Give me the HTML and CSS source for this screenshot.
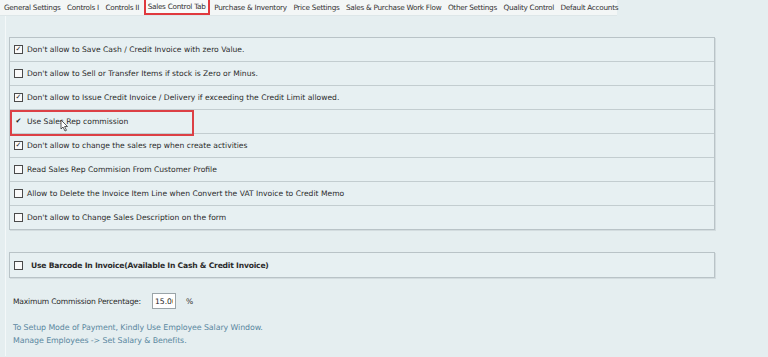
FILE: index.html
```html
<!DOCTYPE html>
<html>
<head>
    <title>Sales Control Tab</title>
    <link rel="stylesheet" href="styles.css">
</head>
<body>
    <div class="tabs">
        <span class="tab">General Settings</span>
        <span class="tab">Controls I</span>
        <span class="tab">Controls II</span>
        <span class="tab active">Sales Control Tab</span>
        <span class="tab">Purchase &amp; Inventory</span>
        <span class="tab">Price Settings</span>
        <span class="tab">Sales &amp; Purchase Work Flow</span>
        <span class="tab">Other Settings</span>
        <span class="tab">Quality Control</span>
        <span class="tab">Default Accounts</span>
    </div>

    <div class="content">
        <div class="panel">
            <div class="row"><span class="box checked">&#10003;</span>Don't allow to Save Cash / Credit Invoice with zero Value.</div>
            <div class="row"><span class="box"></span>Don't allow to Sell or Transfer Items if stock is Zero or Minus.</div>
            <div class="row"><span class="box checked">&#10003;</span>Don't allow to Issue Credit Invoice / Delivery if exceeding the Credit Limit allowed.</div>
            <div class="row highlight">
                <span class="box bare">&#10004;</span>Use Sales Rep commission
                <svg class="cursor" width="9" height="13" viewBox="0 0 9 13">
                    <path d="M1 1 L1 10 L3 8 L5 12 L6.5 11.3 L4.6 7.5 L7.5 7.5 Z" fill="#fff" stroke="#333" stroke-width="0.8"/>
                </svg>
            </div>
            <div class="row"><span class="box checked">&#10003;</span>Don't allow to change the sales rep when create activities</div>
            <div class="row"><span class="box"></span>Read Sales Rep Commision From Customer Profile</div>
            <div class="row"><span class="box"></span>Allow to Delete the Invoice Item Line when Convert the VAT Invoice to Credit Memo</div>
            <div class="row"><span class="box"></span>Don't allow to Change Sales Description on the form</div>
        </div>

        <div class="panel single">
            <div class="row bold"><span class="box"></span>Use Barcode In Invoice(Available In Cash &amp; Credit Invoice)</div>
        </div>

        <div class="field">
            <label for="maxComm">Maximum Commission Percentage:</label>
            <input id="maxComm" class="num" type="text" value="15.00">
            <span class="unit">%</span>
        </div>

        <div class="note">
            To Setup Mode of Payment, Kindly Use Employee Salary Window.<br>
            Manage Employees -&gt; Set Salary &amp; Benefits.
        </div>
    </div>
</body>
</html>
```

FILE: styles.css
```css
body {
    margin: 0;
    font-family: "DejaVu Sans", Tahoma, sans-serif;
    font-size: 7.6px;
    color: #2b2b2b;
    background-color: #e5eef0;
    height: 357px;
    overflow: hidden;
}

/* tab strip */
.tabs {
    display: flex;
    width: 617px;
    height: 16px;
    background-color: #f3f6f6;
    border-bottom: 1px solid #dde6e8;
    padding-left: 2px;
    box-sizing: border-box;
}

.tab {
    display: flex;
    align-items: center;
    padding: 0 2px;
    margin-right: 2.5px;
    color: #333;
    white-space: nowrap;
    font-size: 7.3px;
    letter-spacing: -0.28px;
}

.tab.active {
    border: 2px solid #e0393e;
    border-top: none;
    background-color: #f8fafa;
    padding: 0 2px;
}

.content {
    padding: 21px 0 0 3px;
    border-left: 1px solid #f4f8f9;
    margin-left: 5px;
    height: 340px;
    box-sizing: border-box;
}

.panel {
    width: 704px;
    border: 1px solid #b9c3c7;
    box-shadow: 1px 1px 0 #d3dcdf;
    background-color: #e7f0f2;
}

.panel.single {
    margin-top: 22px;
}

.row {
    position: relative;
    display: flex;
    align-items: center;
    height: 23px;
    padding-left: 4px;
    border-bottom: 1px solid #c3cdd0;
    white-space: nowrap;
}

.row:last-child {
    border-bottom: none;
}

.row.bold {
    font-weight: bold;
    height: 24px;
    letter-spacing: -0.2px;
}

.row.bold .box {
    margin-right: 8px;
}

.row.highlight::after {
    content: "";
    position: absolute;
    left: 0;
    top: 0;
    width: 184px;
    height: 26px;
    border: 2px solid #dc4045;
    box-sizing: border-box;
}

.box {
    display: inline-flex;
    align-items: center;
    justify-content: center;
    width: 7px;
    height: 7px;
    border: 1px solid #4a4a4a;
    background-color: #fafafa;
    margin-right: 4px;
    font-size: 7px;
    line-height: 1;
    color: #222;
    font-weight: bold;
}

.box.bare {
    border-color: transparent;
    background: none;
}

.cursor {
    position: absolute;
    left: 50px;
    top: 9px;
}

.field {
    display: flex;
    align-items: center;
    margin-top: 15px;
    padding-left: 4px;
    letter-spacing: -0.2px;
}

.field label {
    width: 139px;
}

.num {
    width: 24px;
    height: 16px;
    box-sizing: border-box;
    border: 1px solid #9aa4a8;
    background-color: #fff;
    font-family: "DejaVu Sans", Tahoma, sans-serif;
    font-size: 7.6px;
    padding: 0 2px;
    margin: 0;
    overflow: hidden;
    color: #222;
}

.unit {
    margin-left: 10px;
}

.note {
    margin-top: 12px;
    padding-left: 4px;
    color: #5b88a0;
    font-size: 7.9px;
    line-height: 13px;
    letter-spacing: -0.1px;
}
```
